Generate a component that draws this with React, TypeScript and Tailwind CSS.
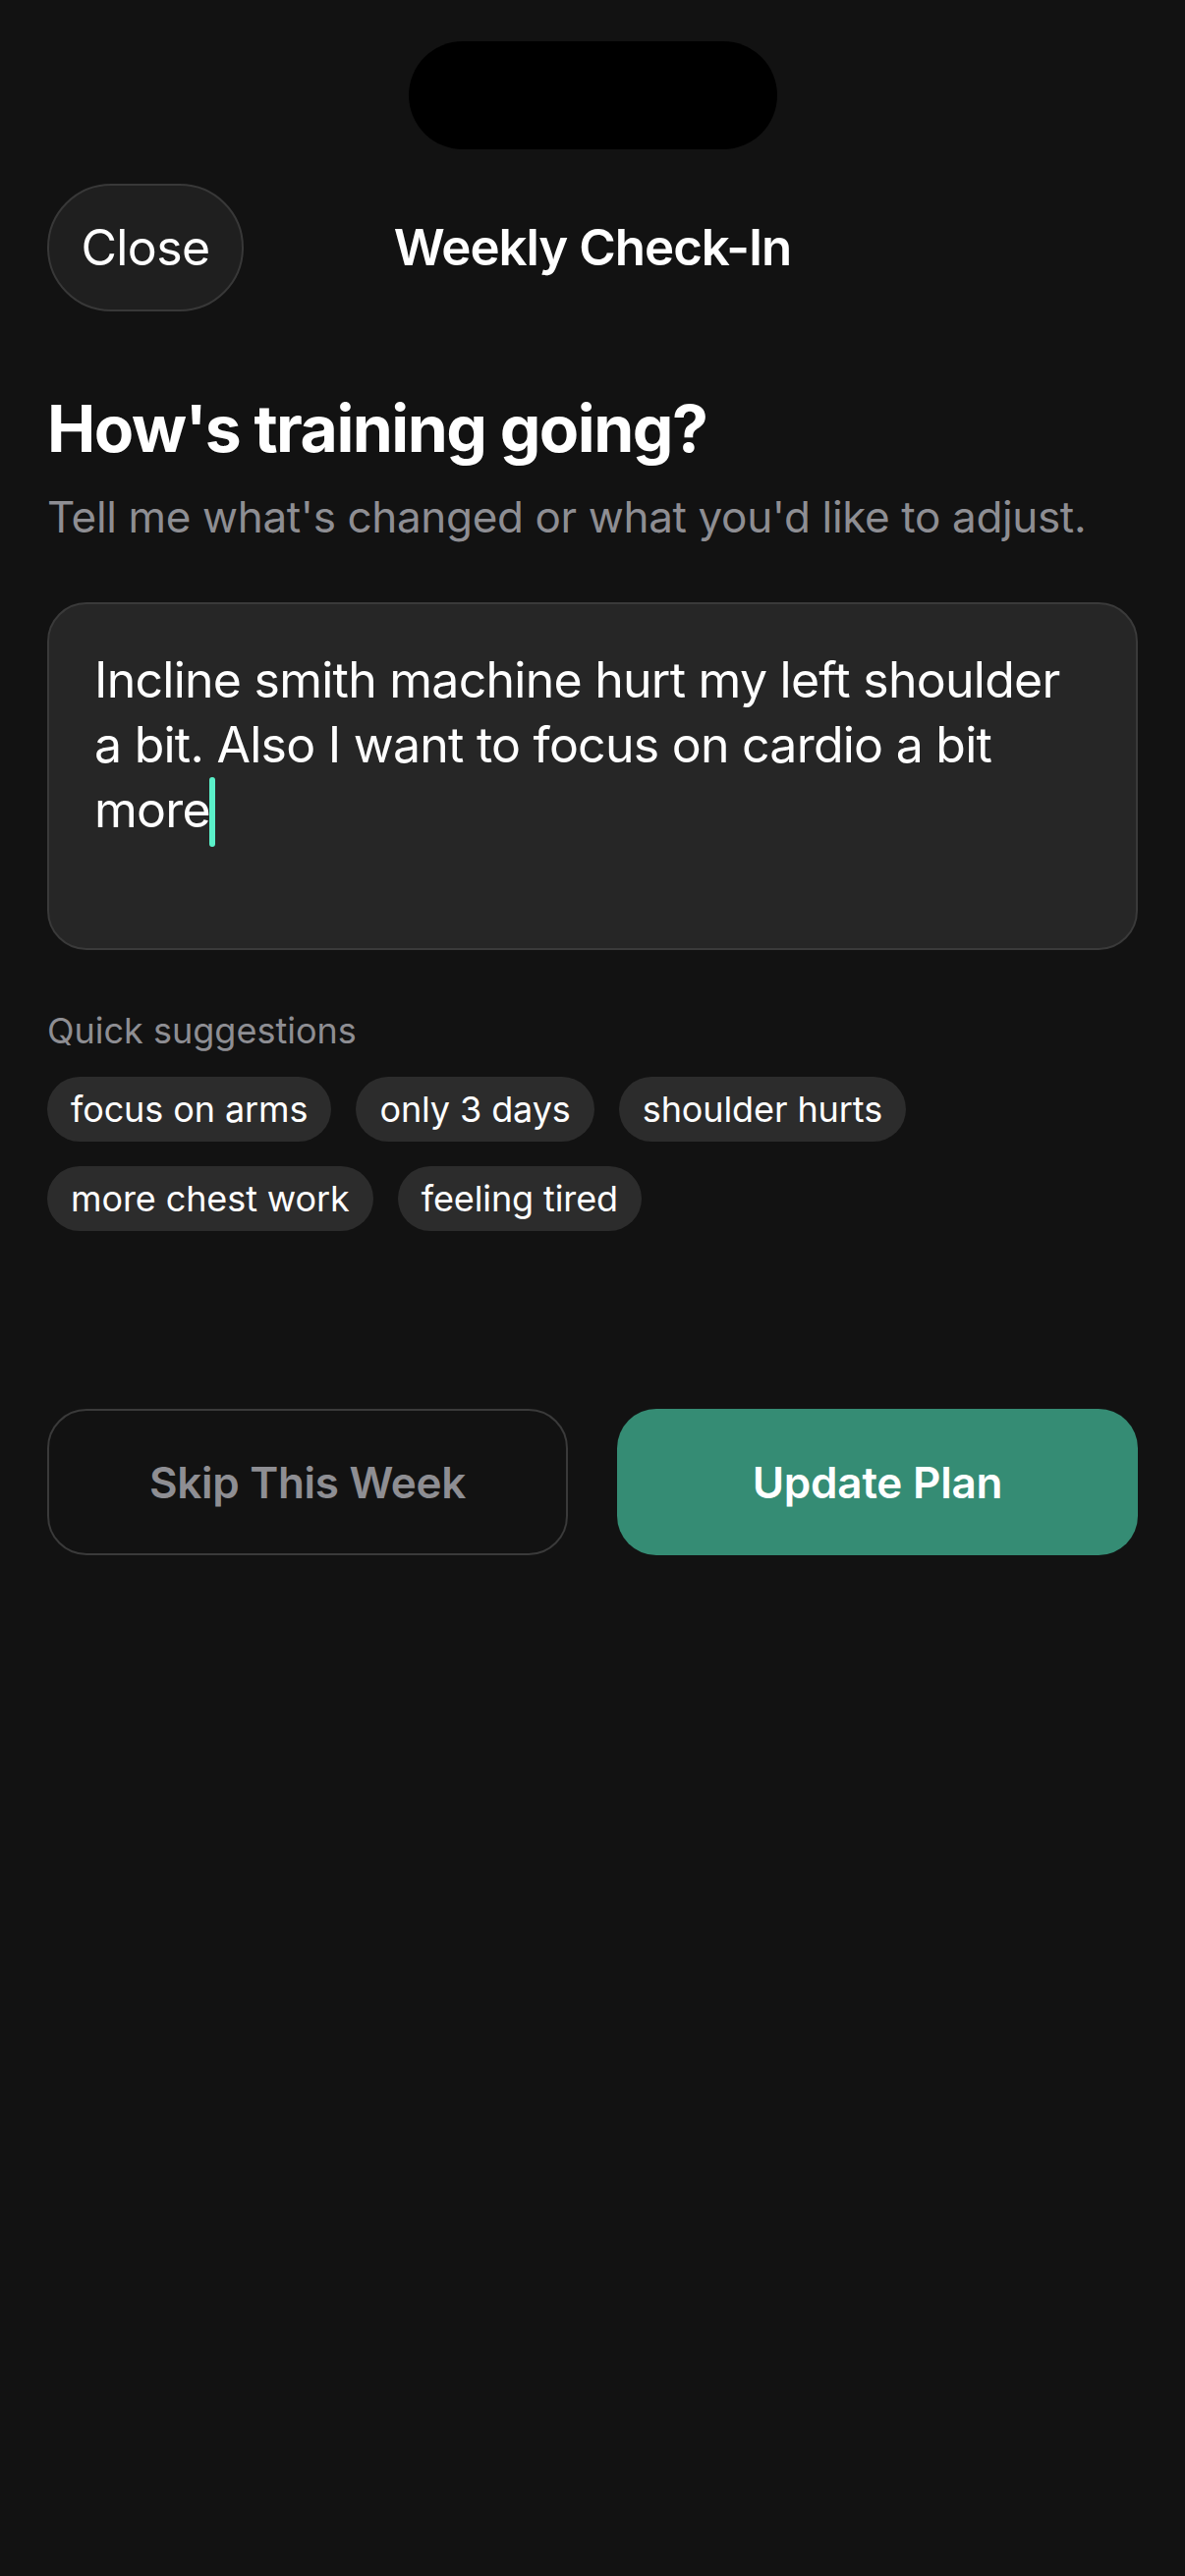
import React from "react";

const chipsRow = ["focus on arms", "only 3 days", "shoulder hurts", "more chest work", "feeling tired"];

export default function App() {
  return (
    <div className="min-h-[2622px] w-full bg-[#121212] font-[family-name:Inter,sans-serif] text-white antialiased">
      <div className="flex justify-center pt-[42px]">
        <div className="h-[110px] w-[375px] rounded-full bg-black" />
      </div>

      <div className="px-[48px]">
        <div className="mt-[35px] grid h-[130px] grid-cols-[1fr_auto_1fr] items-center">
          <div>
            <button className="flex h-[130px] w-[200px] items-center justify-center rounded-full border-2 border-[#383838] bg-[#1f1f1f] text-[50px] leading-[60px] tracking-[-0.6px] text-white">
              Close
            </button>
          </div>
          <div className="text-[51px] font-semibold leading-[60px] tracking-[-1px] text-white">Weekly Check-In</div>
          <div />
        </div>

        <h1 className="mt-[79px] text-[66px] font-bold leading-[80px] tracking-[-1.5px] text-white">
          How's training going?
        </h1>
        <p className="mt-[22px] text-[44px] leading-[56px] tracking-[-0.35px] text-[#8e8e93]">
          Tell me what's changed or what you'd like to adjust.
        </p>

        <div className="mt-[59px] h-[354px] rounded-[40px] border-2 border-[#3a3a3a] bg-[#262626] pl-[46px] pr-[40px] pt-[44px] text-[50px] leading-[66px] tracking-[-0.75px] text-white">
          <div className="whitespace-nowrap">Incline smith machine hurt my left shoulder</div>
          <div className="whitespace-nowrap">a bit. Also I want to focus on cardio a bit</div>
          <div className="whitespace-nowrap">
            more
            <span className="ml-[-1px] inline-block h-[71px] w-[6px] rounded-full bg-[#5af0c9] align-top" />
          </div>
        </div>

        <div className="mt-[60px] text-[36px] leading-[44px] text-[#8e8e93]">Quick suggestions</div>

        <div className="mt-[25px] flex w-[880px] flex-wrap gap-[25px]">
          {chipsRow.map((c) => (
            <div
              key={c}
              className="h-[66px] rounded-full bg-[#2c2c2c] px-[24px] text-[36px] leading-[66px] tracking-[-0.1px] text-white"
            >
              {c}
            </div>
          ))}
        </div>

        <div className="mt-[181px] grid grid-cols-2 gap-[50px]">
          <button className="flex h-[149px] items-center justify-center rounded-[40px] border-2 border-[#3a3a3a] bg-transparent text-[44px] font-semibold tracking-[-0.3px] text-[#8e8e93]">
            Skip This Week
          </button>
          <button className="flex h-[149px] items-center justify-center rounded-[40px] bg-[#358c74] text-[44px] font-semibold tracking-[-0.2px] text-white">
            Update Plan
          </button>
        </div>
      </div>
    </div>
  );
}
